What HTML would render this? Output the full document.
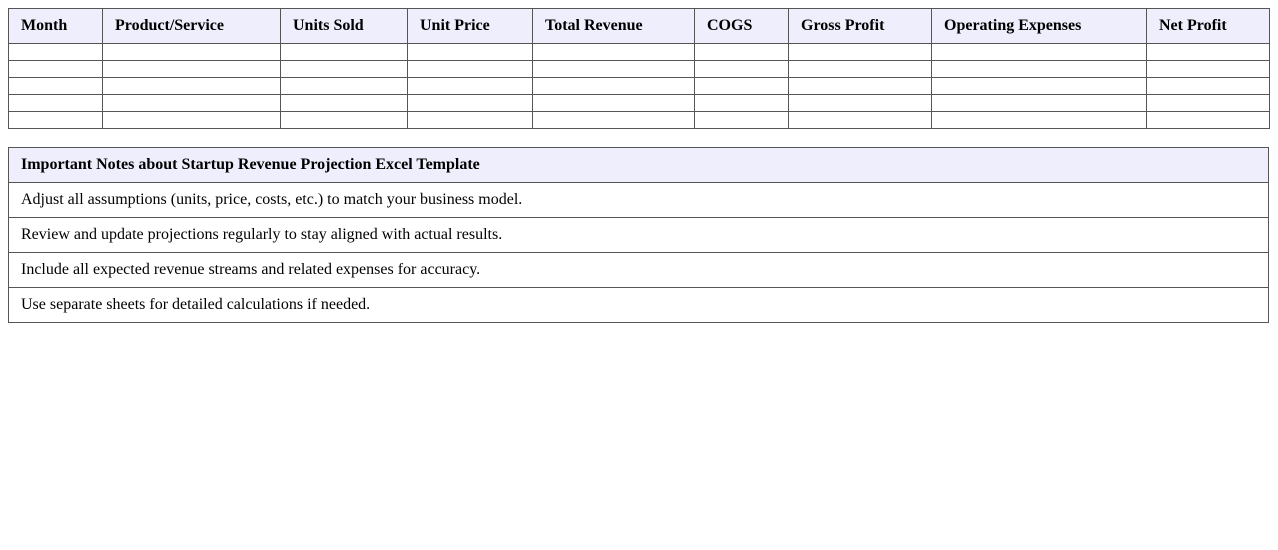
<!DOCTYPE html>
<html><head><style>
body{margin:0;background:#fff;font-family:"Liberation Serif",serif;color:#000}
table{border-collapse:collapse;position:absolute;left:8px;table-layout:fixed}
td,th{border:1px solid #555;padding:0 0 0 12px;text-align:left;font-size:16px}
th{background:#eeeefc;font-weight:bold}
#t1{top:8px;width:1261px}
#t1 th{height:34px}
#t1 td{height:16px}
#t2{top:147px;width:1261px}
#t2 td{height:34px;font-size:16px;padding-left:12px}
#t2 th{height:34px;font-size:16px}
</style></head><body>
<table id="t1">
<colgroup><col style="width:94px"><col style="width:178px"><col style="width:127px"><col style="width:125px"><col style="width:162px"><col style="width:94px"><col style="width:143px"><col style="width:215px"><col style="width:123px"></colgroup>
<tr><th>Month</th><th>Product/Service</th><th>Units Sold</th><th>Unit Price</th><th>Total Revenue</th><th>COGS</th><th>Gross Profit</th><th>Operating Expenses</th><th>Net Profit</th></tr>
<tr><td></td><td></td><td></td><td></td><td></td><td></td><td></td><td></td><td></td></tr>
<tr><td></td><td></td><td></td><td></td><td></td><td></td><td></td><td></td><td></td></tr>
<tr><td></td><td></td><td></td><td></td><td></td><td></td><td></td><td></td><td></td></tr>
<tr><td></td><td></td><td></td><td></td><td></td><td></td><td></td><td></td><td></td></tr>
<tr><td></td><td></td><td></td><td></td><td></td><td></td><td></td><td></td><td></td></tr>
</table>
<table id="t2">
<tr><th>Important Notes about Startup Revenue Projection Excel Template</th></tr>
<tr><td>Adjust all assumptions (units, price, costs, etc.) to match your business model.</td></tr>
<tr><td>Review and update projections regularly to stay aligned with actual results.</td></tr>
<tr><td>Include all expected revenue streams and related expenses for accuracy.</td></tr>
<tr><td>Use separate sheets for detailed calculations if needed.</td></tr>
</table>
</body></html>
